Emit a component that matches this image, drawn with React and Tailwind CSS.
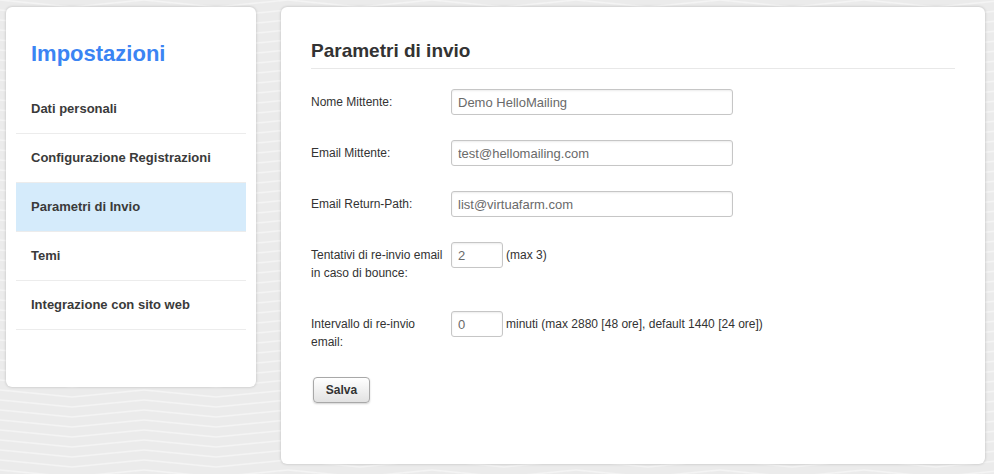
import React from 'react'

const MENU = [
  { label: 'Dati personali' },
  { label: 'Configurazione Registrazioni' },
  { label: 'Parametri di Invio', active: true },
  { label: 'Temi' },
  { label: 'Integrazione con sito web' },
]

// Zig-zag backdrop behind the two cards.
function Chevrons() {
  return (
    <svg className="pointer-events-none absolute inset-0 h-full w-full" aria-hidden="true">
      <defs>
        <pattern id="chev" width="144" height="10" patternUnits="userSpaceOnUse">
          {[-10, 0, 10].map((y) => (
            <path
              key={y}
              d={`M0 ${y} L72 ${y + 7} L144 ${y}`}
              fill="none"
              stroke="#f4f4f4"
              strokeWidth="1.6"
            />
          ))}
        </pattern>
      </defs>
      <rect width="100%" height="100%" fill="url(#chev)" />
    </svg>
  )
}

function Field({ label, className = '', value, width = 'w-[282px]', hint }) {
  return (
    <div className={`flex items-start ${className}`}>
      <div className="mr-[4px] w-[136px] shrink-0 pt-[4px] text-[12px] leading-[18px] text-[#333]">{label}</div>
      <input
        type="text"
        defaultValue={value}
        className={`h-[26px] ${width} rounded-[3px] border border-[#c6c6c6] bg-white px-[6px] text-[13px] text-[#6a6a6a] shadow-[inset_0_1px_2px_rgba(0,0,0,0.08)] outline-none`}
      />
      {hint && <span className="ml-[3px] text-[12px] leading-[26px] text-[#333]">{hint}</span>}
    </div>
  )
}

export default function App() {
  return (
    <div className="relative flex min-h-[474px] items-start gap-[25px] bg-[#ebebeb] pl-[6px] pt-[7px] font-['Liberation_Sans',Arial,sans-serif]">
      <Chevrons />

      {/* Sidebar */}
      <aside className="relative z-10 h-[380px] w-[250px] rounded-[6px] bg-white pt-[34px] shadow-[0_0_3px_rgba(0,0,0,0.22)]">
        <h1 className="px-[25px] text-[22px] font-bold leading-[26px] text-[#3b84f3]">Impostazioni</h1>
        <ul className="mx-[10px] mt-[18px]">
          {MENU.map((m) => (
            <li
              key={m.label}
              className={`flex h-[49px] items-center border-b border-[#ececec] pl-[15px] text-[13px] font-bold text-[#3a3a3a] ${
                m.active ? 'bg-[#d5ebfb]' : ''
              }`}
            >
              {m.label}
            </li>
          ))}
        </ul>
      </aside>

      {/* Main panel */}
      <main className="relative z-10 h-[457px] w-[704px] rounded-[6px] bg-white px-[30px] pt-[33px] shadow-[0_0_3px_rgba(0,0,0,0.22)]">
        <h2 className="border-b border-[#e8e8e8] pb-[6px] text-[19px] font-bold leading-[22px] text-[#333]">
          Parametri di invio
        </h2>

        <form className="mt-[20px] flex flex-col" onSubmit={(e) => e.preventDefault()}>
          <Field label="Nome Mittente:" value="Demo HelloMailing" />
          <Field className="mt-[25px]" label="Email Mittente:" value="test@hellomailing.com" />
          <Field className="mt-[25px]" label="Email Return-Path:" value="list@virtuafarm.com" />
          <Field
            className="mt-[25px]"
            label="Tentativi di re-invio email in caso di bounce:"
            value="2"
            width="w-[52px]"
            hint="(max 3)"
          />
          <Field
            className="mt-[29px]"
            label={
              <>
                Intervallo di re-invio
                <br />
                email:
              </>
            }
            value="0"
            width="w-[52px]"
            hint="minuti (max 2880 [48 ore], default 1440 [24 ore])"
          />
          <div className="mt-[26px]">
            <button
              type="submit"
              className="ml-[2px] h-[26px] w-[57px] rounded-[4px] border border-[#a8a8a8] bg-gradient-to-b from-white to-[#e2e2e2] text-[12px] font-bold text-[#333] shadow-[0_1px_2px_rgba(0,0,0,0.18)]"
            >
              Salva
            </button>
          </div>
        </form>
      </main>
    </div>
  )
}
